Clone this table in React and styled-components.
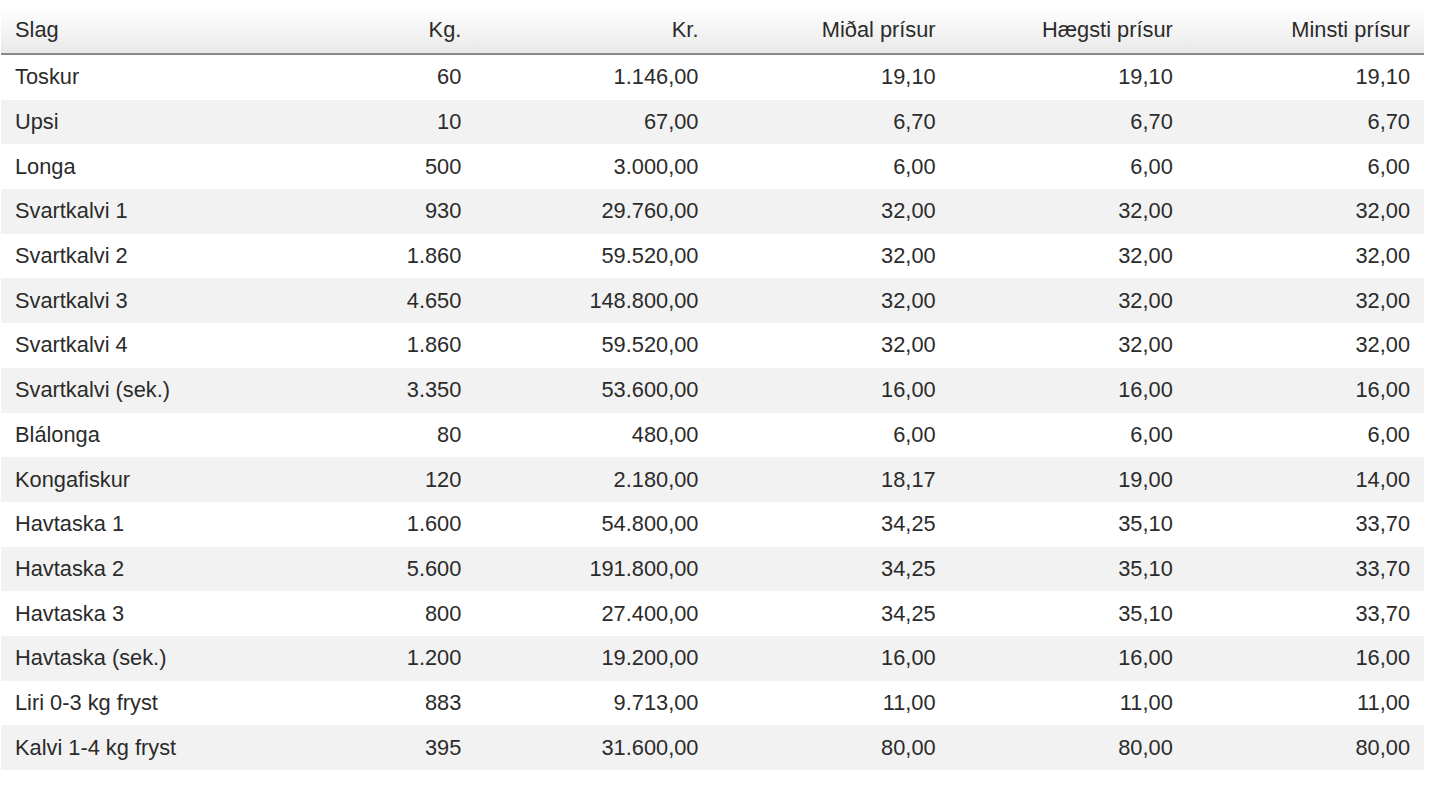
import React from 'react';
import styled, { createGlobalStyle } from 'styled-components';

const rows = [
  ['Toskur', '60', '1.146,00', '19,10', '19,10', '19,10'],
  ['Upsi', '10', '67,00', '6,70', '6,70', '6,70'],
  ['Longa', '500', '3.000,00', '6,00', '6,00', '6,00'],
  ['Svartkalvi 1', '930', '29.760,00', '32,00', '32,00', '32,00'],
  ['Svartkalvi 2', '1.860', '59.520,00', '32,00', '32,00', '32,00'],
  ['Svartkalvi 3', '4.650', '148.800,00', '32,00', '32,00', '32,00'],
  ['Svartkalvi 4', '1.860', '59.520,00', '32,00', '32,00', '32,00'],
  ['Svartkalvi (sek.)', '3.350', '53.600,00', '16,00', '16,00', '16,00'],
  ['Blálonga', '80', '480,00', '6,00', '6,00', '6,00'],
  ['Kongafiskur', '120', '2.180,00', '18,17', '19,00', '14,00'],
  ['Havtaska 1', '1.600', '54.800,00', '34,25', '35,10', '33,70'],
  ['Havtaska 2', '5.600', '191.800,00', '34,25', '35,10', '33,70'],
  ['Havtaska 3', '800', '27.400,00', '34,25', '35,10', '33,70'],
  ['Havtaska (sek.)', '1.200', '19.200,00', '16,00', '16,00', '16,00'],
  ['Liri 0-3 kg fryst', '883', '9.713,00', '11,00', '11,00', '11,00'],
  ['Kalvi 1-4 kg fryst', '395', '31.600,00', '80,00', '80,00', '80,00'],
];

const headers = ['Slag', 'Kg.', 'Kr.', 'Miðal prísur', 'Hægsti prísur', 'Minsti prísur'];

const App = () => (
  <Page>
    <GlobalStyle />
    <Table>
      <thead>
        <tr>
          {headers.map((h, i) => (
            <Th key={h} $left={i === 0}>{h}</Th>
          ))}
        </tr>
      </thead>
      <tbody>
        {rows.map((r, idx) => (
          <Row key={r[0]} $odd={idx % 2 === 1}>
            {r.map((c, i) => (
              <Td key={i} $left={i === 0}>{c}</Td>
            ))}
          </Row>
        ))}
      </tbody>
    </Table>
  </Page>
);

const GlobalStyle = createGlobalStyle`
  body {
    margin: 0;
    background: #fff;
    font-family: "Liberation Sans", Arial, Helvetica, sans-serif;
  }
`;

const Page = styled.div`
  padding: 7px 16px 0 1px;
`;

const Table = styled.table`
  width: 1423px;
  border-collapse: collapse;
  table-layout: fixed;
  color: #2b2b2b;
  font-size: 21.8px;
`;

const Th = styled.th`
  height: 46px;
  padding: 0 14px;
  font-weight: normal;
  text-align: ${p => (p.$left ? 'left' : 'right')};
  background: linear-gradient(to bottom, #ffffff 0%, #e9e9e9 100%);
  border-bottom: 2px solid #8a8a8a;
  white-space: nowrap;
`;

const Row = styled.tr`
  background: ${p => (p.$odd ? '#f2f2f2' : '#ffffff')};
`;

const Td = styled.td`
  height: 44.7px;
  padding: 0 14px;
  text-align: ${p => (p.$left ? 'left' : 'right')};
  white-space: nowrap;
`;

export default App;
